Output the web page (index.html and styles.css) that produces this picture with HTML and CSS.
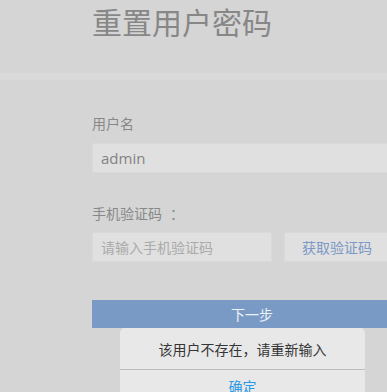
FILE: index.html
```html
<!DOCTYPE html>
<html lang="zh-CN">
<head>
    <meta charset="UTF-8">
    <meta name="viewport" content="width=device-width, initial-scale=1.0">
    <title>重置用户密码</title>
    <link rel="stylesheet" href="styles.css">
</head>
<body>
    <div class="header">
        <h1 class="title">重置用户密码</h1>
    </div>
    <div class="divider"></div>

    <div class="form">
        <div class="label">用户名</div>
        <input class="field" type="text" value="admin">

        <div class="label label-code">手机验证码<span class="colon">：</span></div>
        <div class="code-row">
            <input class="field code-field" type="text" placeholder="请输入手机验证码">
            <button class="code-btn">获取验证码</button>
        </div>

        <button class="next-btn">下一步</button>
    </div>

    <!-- alert dialog -->
    <div class="dialog">
        <div class="dialog-msg">该用户不存在，请重新输入</div>
        <div class="dialog-btn">确定</div>
    </div>
</body>
</html>
```

FILE: styles.css
```css
* {
    margin: 0;
    padding: 0;
    box-sizing: border-box;
}

body {
    font-family: "Open Sans", "Noto Sans CJK SC", sans-serif;
    background: #d5d5d5;
    color: #888;
    height: 100vh;
    overflow: hidden;
    position: relative;
}

/* Header */
.header {
    height: 73px;
    padding-left: 92px;
}

.title {
    font-size: 30px;
    font-weight: 400;
    line-height: 46px;
    color: #878787;
}

.divider {
    height: 7px;
    background: #dadada;
}

/* Form */
.form {
    margin-left: 92px;
    width: 320px;
}

.label {
    font-size: 14px;
    line-height: 20px;
    margin-top: 34px;
    margin-bottom: 9px;
    color: #888;
}

.label-code {
    margin-top: 31px;
    margin-bottom: 8px;
}

.colon {
    margin-left: 8px;
}

.field {
    display: block;
    width: 100%;
    height: 30px;
    border: 1px solid #d9d9d9;
    background: #e0e0e0;
    padding: 0 8px;
    font-family: inherit;
    font-size: 15px;
    color: #838383;
    outline: none;
}

.field::placeholder {
    color: #aaa;
    font-size: 14px;
}

.code-row {
    display: flex;
    gap: 12px;
}

.code-field {
    width: 180px;
    flex: none;
}

.code-btn {
    flex: 1;
    height: 30px;
    border: 1px solid #d9d9d9;
    background: #e0e0e0;
    font-family: inherit;
    font-size: 14px;
    color: #7b98c6;
    text-align: left;
    padding-left: 17px;
}

.next-btn {
    display: block;
    width: 100%;
    height: 28px;
    margin-top: 38px;
    border: none;
    background: #7a9ac6;
    color: #edf1f8;
    font-family: inherit;
    font-size: 14px;
}

/* Dialog */
.dialog {
    position: absolute;
    left: 120px;
    top: 328px;
    width: 245px;
    background: #e8e8e8;
    border-radius: 5px;
}

.dialog-msg {
    height: 42px;
    line-height: 44px;
    text-align: center;
    font-size: 14px;
    color: #353535;
    border-bottom: 1px solid #bcbcbc;
}

.dialog-btn {
    height: 40px;
    line-height: 33px;
    text-align: center;
    font-size: 14px;
    color: #2b9ae6;
}
```
